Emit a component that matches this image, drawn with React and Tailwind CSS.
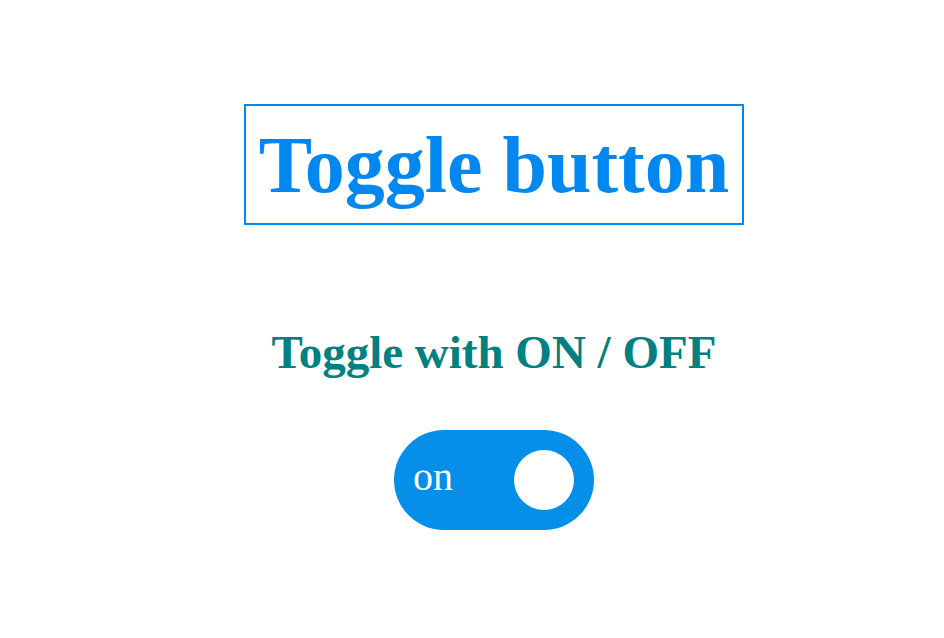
export default function App() {
  return (
    <div className="min-h-[638px] bg-white flex flex-col items-center pl-[44px] pt-[104px] font-['Liberation_Serif','Times_New_Roman',serif]">
      <h1 className="w-[500px] h-[121px] border-2 border-[#0088f0] flex items-center justify-center text-[80px] font-bold text-[#0088f0] leading-none">
        Toggle button
      </h1>

      <h2 className="mt-[101px] text-[47px] leading-[53px] font-bold text-[#008080]">
        Toggle with ON / OFF
      </h2>

      <div className="mt-[51px] w-[200px] h-[100px] rounded-full bg-[#058fe9] flex items-center justify-between pl-[19px] pr-[20px]">
        <span className="text-white text-[40px] leading-none mb-[6px]">on</span>
        <span className="w-[60px] h-[60px] rounded-full bg-white" />
      </div>
    </div>
  );
}
